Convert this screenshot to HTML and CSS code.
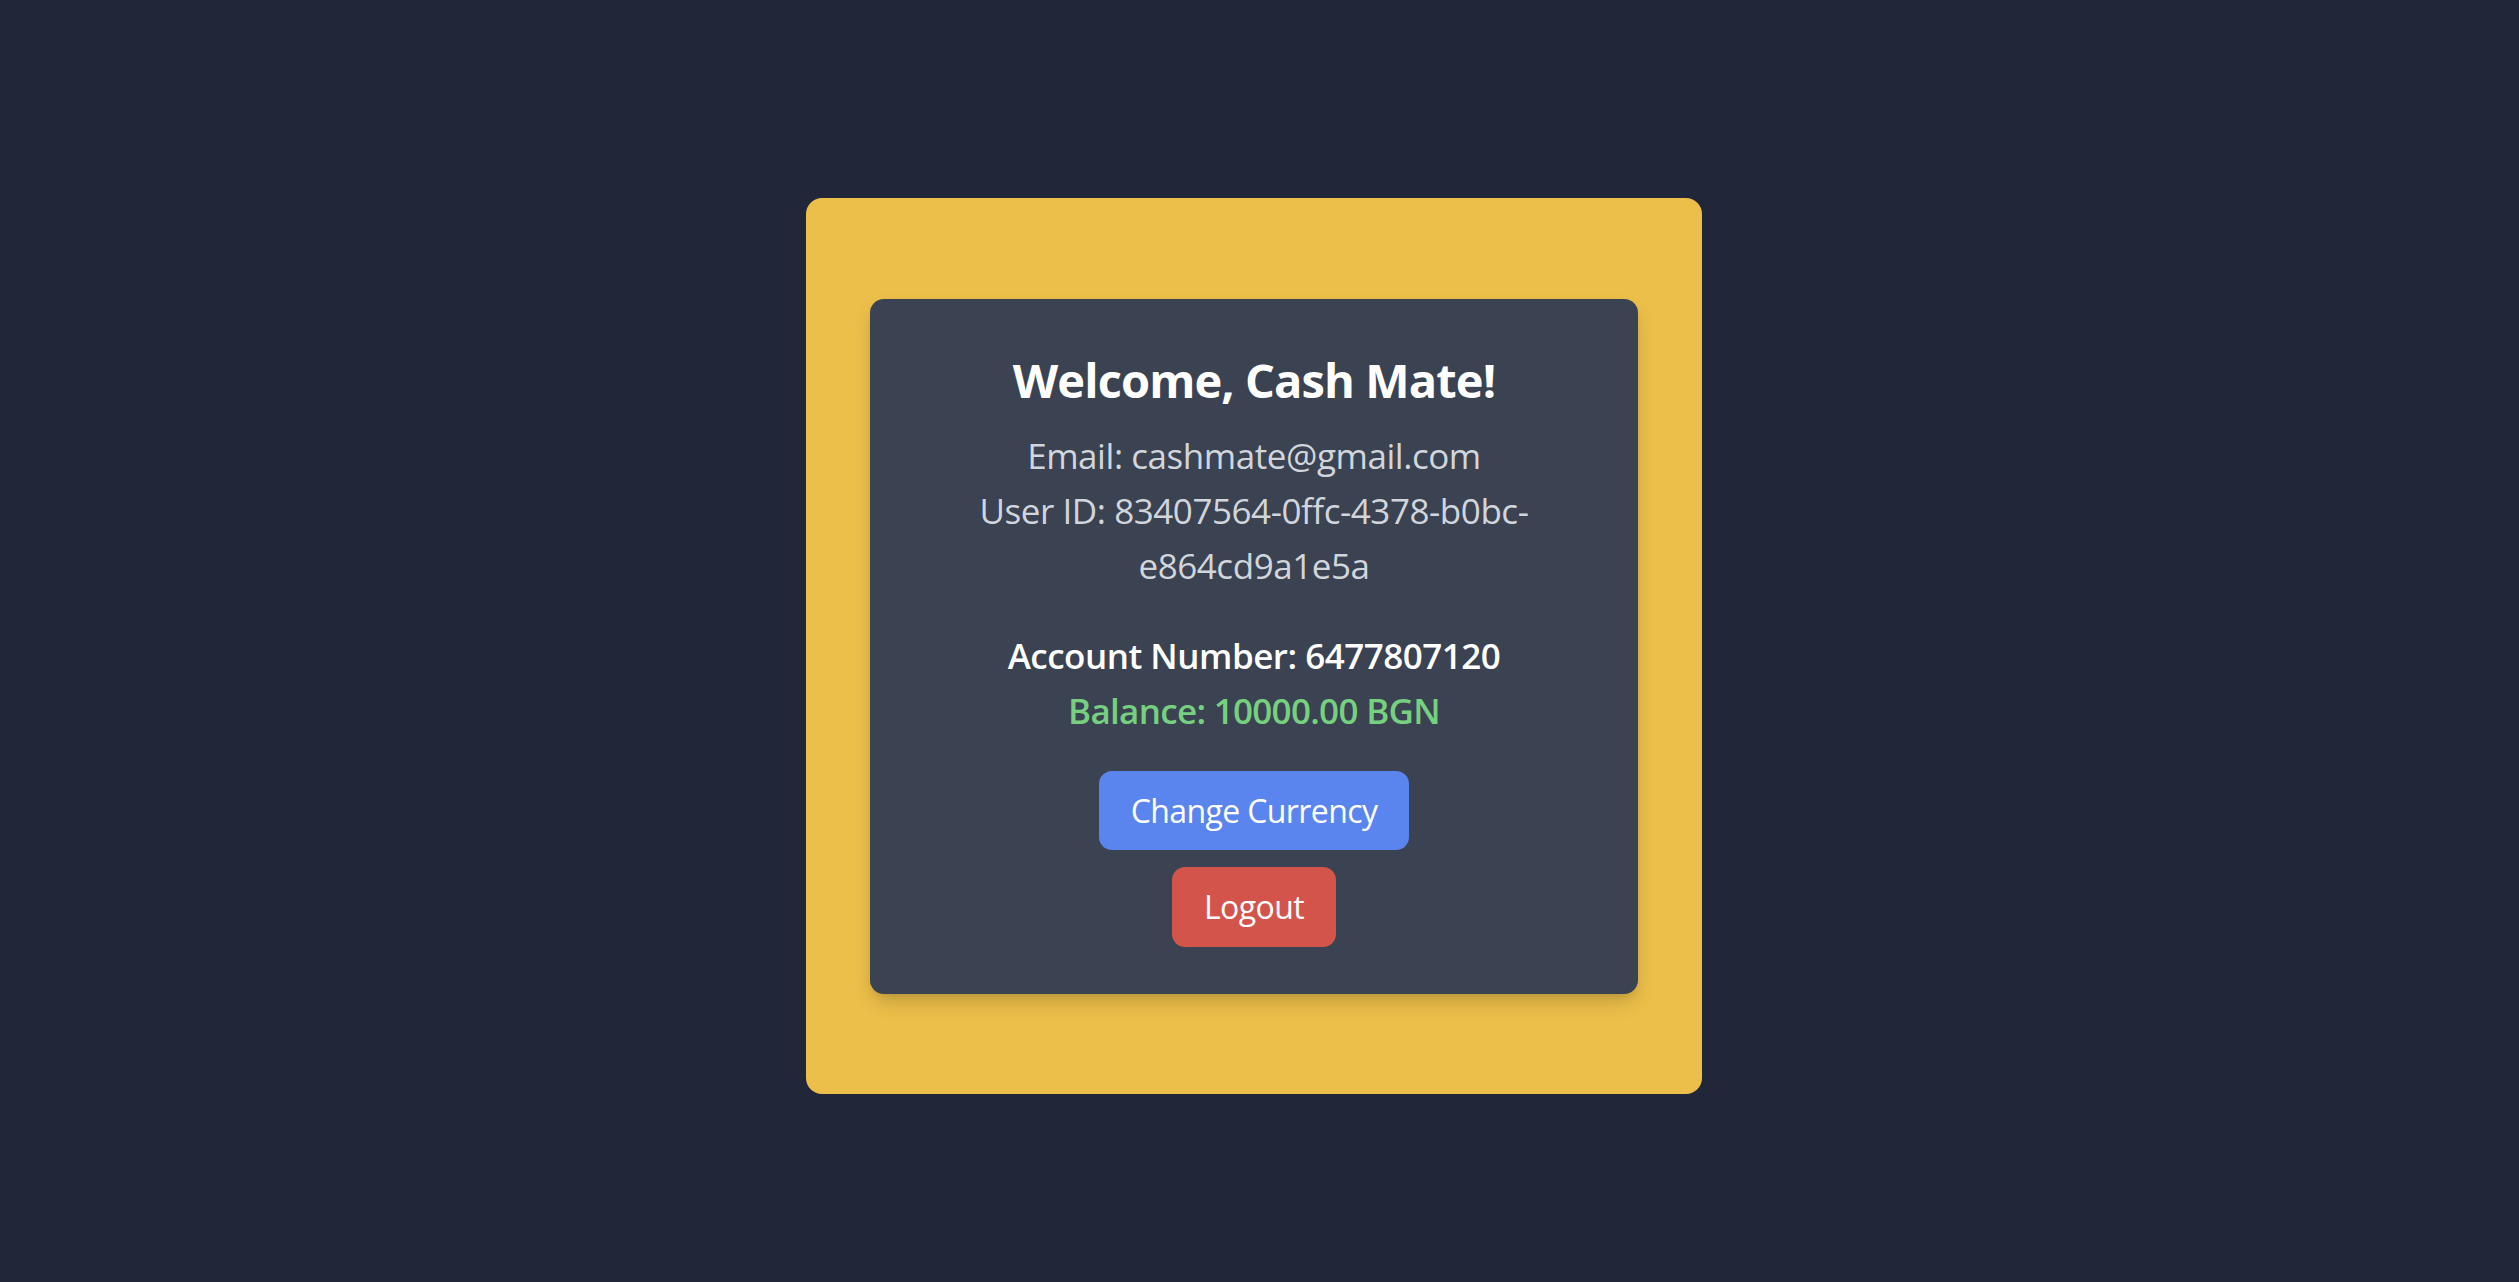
FILE: index.html
```html
<!DOCTYPE html>
<html lang="en">
<head>
<meta charset="utf-8">
<title>Cash Mate</title>
<link rel="stylesheet" href="styles.css">
</head>
<body>
<div class="page">
  <div class="frame">
    <div class="card">
      <h1 class="title">Welcome, Cash Mate!</h1>
      <div class="info">
        <p class="line">Email: cashmate@gmail.com</p>
        <p class="line">User ID: 83407564-0ffc-4378-b0bc-e864cd9a1e5a</p>
      </div>
      <div class="account">
        <p class="acc">Account Number: 6477807120</p>
        <p class="bal">Balance: 10000.00 BGN</p>
      </div>
      <div class="actions">
        <button class="btn btn-blue">Change Currency</button>
        <button class="btn btn-red">Logout</button>
      </div>
    </div>
  </div>
</div>
</body>
</html>
```
FILE: styles.css
```css
* { box-sizing: border-box; }
html, body { margin: 0; padding: 0; }
body {
  background: #212739;
  font-family: "Open Sans", "Noto Sans", sans-serif;
}
.page {
  min-height: 100vh;
  display: flex;
  align-items: center;
  justify-content: center;
  padding: 10px 11px 0 0;
}
.frame {
  width: 896px;
  height: 896px;
  background: #ECBF4A;
  border-radius: 16px;
  display: flex;
  align-items: center;
  justify-content: center;
}
.card {
  width: 768px;
  background: #3B4252;
  border-radius: 14px;
  padding: 49px 48px 47px;
  text-align: center;
  box-shadow: 0 10px 20px -3px rgba(0,0,0,0.18), 0 4px 8px -4px rgba(0,0,0,0.12);
}
.title {
  margin: 0;
  font-size: 47px;
  line-height: 64px;
  font-weight: 700;
  letter-spacing: -0.9px;
  color: #ffffff;
}
.info { margin-top: 16px; }
.line {
  margin: 0;
  font-size: 35px;
  line-height: 55px;
  letter-spacing: -0.45px;
  color: #D1D5DC;
}
.account { margin-top: 35px; }
.acc, .bal {
  margin: 0;
  font-size: 35px;
  line-height: 55px;
  font-weight: 600;
}
.acc { color: #ffffff; letter-spacing: -0.5px; }
.bal { color: #76D07F; letter-spacing: -0.7px; }
.actions {
  margin-top: 33px;
  display: flex;
  flex-direction: column;
  align-items: center;
  gap: 17px;
}
.btn {
  border: none;
  border-radius: 13px;
  font-family: inherit;
  font-size: 32px;
  line-height: 47px;
  letter-spacing: -0.6px;
  padding: 16px 32px;
  color: #ffffff;
  cursor: pointer;
}
.btn-blue { background: #5B85EE; height: 79px; }
.btn-red { background: #D3544B; height: 80px; }
```
